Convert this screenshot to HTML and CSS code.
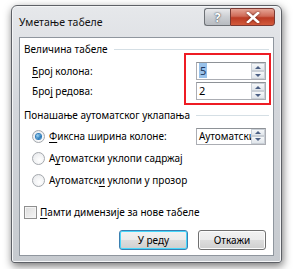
FILE: index.html
```html
<!DOCTYPE html>
<html lang="sr">
  <head>
    <meta charset="UTF-8" />
    <title>Уметање табеле</title>
    <link rel="stylesheet" href="styles.css">
  </head>
  <body>
    <div class="window">
      <div class="titlebar">
        <span class="title">Уметање табеле</span>
        <div class="caption-btns">
          <div class="cap-btn help">?</div>
          <div class="cap-btn close">
            <svg width="14" height="11" viewBox="0 0 14 11">
              <path d="M2 1 L12 10 M12 1 L2 10" stroke="#fff" stroke-width="2.6" stroke-linecap="square" />
            </svg>
          </div>
        </div>
      </div>
      <div class="client">
        <div class="group-head"><span>Величина табеле</span><i class="rule"></i></div>

        <div class="field-row first">
          <label><u>Б</u>рој колона:</label>
          <div class="spin">
            <div class="spin-text num"><span class="sel">5</span></div>
            <div class="spin-btns"><b class="up"></b><b class="down"></b></div>
          </div>
        </div>
        <div class="field-row">
          <label>Бро<u>ј</u> редова:</label>
          <div class="spin">
            <div class="spin-text num">2</div>
            <div class="spin-btns"><b class="up"></b><b class="down"></b></div>
          </div>
        </div>

        <div class="group-head second"><span>Понашање аутоматског уклапања</span><i class="rule"></i></div>

        <div class="radio-row first">
          <span class="radio checked"></span>
          <span class="radio-label"><u>Ф</u>иксна ширина колоне:</span>
          <div class="spin combo">
            <div class="spin-text">Аутоматски</div>
            <div class="spin-btns"><b class="up"></b><b class="down"></b></div>
          </div>
        </div>
        <div class="radio-row">
          <span class="radio"></span>
          <span class="radio-label">А<u>у</u>томатски уклопи садржај</span>
        </div>
        <div class="radio-row">
          <span class="radio"></span>
          <span class="radio-label">Аутоматск<u>и</u> уклопи у прозор</span>
        </div>

        <div class="check-row">
          <span class="checkbox"></span>
          <span class="check-label"><u>П</u>амти димензије за нове табеле</span>
        </div>

        <div class="buttons">
          <div class="btn default">У реду</div>
          <div class="btn">Откажи</div>
        </div>

        <div class="highlight"></div>
      </div>
    </div>
  </body>
</html>
```

FILE: styles.css
```css
html,
body {
  margin: 0;
  width: 300px;
  height: 269px;
  background: #fff;
  overflow: hidden;
}

body {
  font-family: "Noto Sans", "Liberation Sans", sans-serif;
  font-size: 10px;
  color: #000;
}

u {
  text-decoration: underline;
  text-underline-offset: 2px;
}

.window {
  box-sizing: border-box;
  margin: 5px 0 0 11px;
  width: 271px;
  height: 258px;
  border: 1px solid #5d6066;
  border-radius: 6px 6px 3px 3px;
  padding: 0 7px 6px 7px;
  background: linear-gradient(#e6e8eb, #d3d6db 40%, #c6cacf);
  box-shadow: 1px 3px 9px rgba(0, 0, 0, 0.55), inset 0 0 0 1px #f4f5f6;
  display: flex;
  flex-direction: column;
}

.titlebar {
  height: 31px;
  display: flex;
  justify-content: space-between;
  align-items: flex-start;
}

.title {
  padding-top: 8px;
  line-height: 16px;
  font-size: 10.5px;
  color: #111;
}

.caption-btns {
  display: flex;
  margin-top: 2px;
  margin-right: -1px;
}

.cap-btn {
  box-sizing: border-box;
  height: 18px;
  border: 1px solid #6d7176;
  display: flex;
  align-items: center;
  justify-content: center;
}

.help {
  width: 26px;
  border-radius: 3px 0 0 3px;
  border-right: none;
  background: linear-gradient(#e9eaec, #cbced2 50%, #b7bbc0);
  color: #fff;
  font-weight: bold;
  font-size: 12px;
  text-shadow: 0 0 2px #4d5258, 0 0 1px #4d5258;
}

.close {
  width: 45px;
  border-radius: 0 3px 3px 0;
  border-color: #7b3a33;
  background: linear-gradient(#e6a596, #cf6a57 45%, #bb3b24 55%, #d35b3c);
}

.close svg {
  filter: drop-shadow(0 0 1px #5e1c12);
}

.client {
  position: relative;
  flex: 1;
  border: 1px solid #8f969e;
  background: #fff;
  padding: 3px 7px 0 4px;
  display: flex;
  flex-direction: column;
}

.group-head {
  height: 16px;
  display: flex;
  align-items: center;
  gap: 6px;
  margin-right: -3px;
}

.group-head.second {
  margin-top: 7px;
}

.rule {
  flex: 1;
  height: 1px;
  background: #d5dfe5;
}

.field-row {
  height: 18px;
  margin-top: 2px;
  margin-left: 8px;
  display: flex;
  align-items: center;
  justify-content: space-between;
}

.field-row.first {
  margin-top: 5px;
}

.spin {
  box-sizing: border-box;
  width: 70px;
  height: 18px;
  border: 1px solid #abadb3;
  border-top-color: #8e9297;
  display: flex;
}

.spin-text {
  flex: 1;
  padding-left: 2px;
  line-height: 15px;
  overflow: hidden;
  white-space: nowrap;
}

.spin-text.num {
  font-size: 11px;
  line-height: 16px;
}

.sel {
  background: #99c2ea;
  color: #1b3763;
  padding: 0 1px;
}

.spin-btns {
  width: 14px;
  display: flex;
  flex-direction: column;
}

.spin-btns b {
  flex: 1;
  border: 1px solid #c9cfd6;
  background: linear-gradient(#f5f7f9, #e1e6eb);
  display: flex;
  align-items: center;
  justify-content: center;
}

.spin-btns b::after {
  content: "";
  border-left: 3px solid transparent;
  border-right: 3px solid transparent;
}

.spin-btns .up::after {
  border-bottom: 3px solid #4d6185;
}

.spin-btns .down::after {
  border-top: 3px solid #4d6185;
}

.radio-row {
  height: 22px;
  margin-left: 8px;
  display: flex;
  align-items: center;
}

.radio-row.first {
  margin-top: 2px;
}

.radio {
  box-sizing: border-box;
  width: 13px;
  height: 13px;
  border-radius: 50%;
  border: 1px solid #a4a8ad;
  background: radial-gradient(circle at 60% 65%, #fff, #e4e6e9);
  display: flex;
  align-items: center;
  justify-content: center;
}

.radio.checked::after {
  content: "";
  width: 5px;
  height: 5px;
  border-radius: 50%;
  background: radial-gradient(circle at 35% 35%, #9fd6f6, #1b6fb1 70%);
  box-shadow: 0 0 0 1px #2f7cbb;
}

.radio-label {
  margin-left: 4px;
  flex: 1;
}

.combo {
  height: 17px;
}

.check-row {
  height: 18px;
  margin-top: 12px;
  display: flex;
  align-items: center;
}

.checkbox {
  box-sizing: border-box;
  width: 13px;
  height: 13px;
  border: 1px solid #8f8f8f;
  background: linear-gradient(135deg, #dcdcdc, #f6f6f6);
  box-shadow: inset 0 0 0 1px #f4f4f4;
}

.check-label {
  margin-left: 3px;
}

.buttons {
  margin-top: 9px;
  display: flex;
  justify-content: flex-end;
  gap: 10px;
}

.btn {
  box-sizing: border-box;
  width: 68px;
  height: 20px;
  border: 1px solid #707070;
  border-radius: 3px;
  background: linear-gradient(#f2f2f2, #ebebeb 50%, #dddddd 51%, #cfcfcf);
  box-shadow: inset 0 0 0 1px #fcfcfc;
  display: flex;
  align-items: center;
  justify-content: center;
}

.btn.default {
  width: 69px;
  border-color: #3c7fb1;
  box-shadow: inset 0 0 0 1px #48d7fb;
}

.highlight {
  position: absolute;
  left: 164px;
  top: 15px;
  width: 87px;
  height: 52px;
  box-sizing: border-box;
  border: 2px solid #ee1c24;
}
```
